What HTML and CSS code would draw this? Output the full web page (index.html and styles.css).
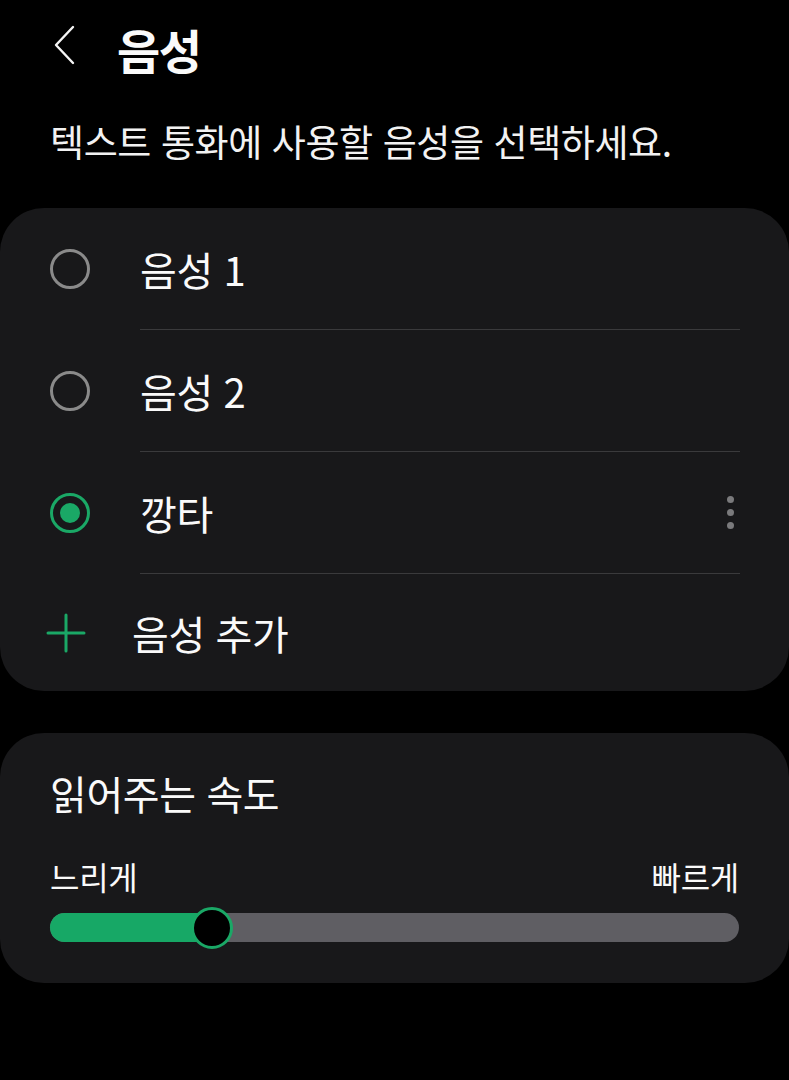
FILE: index.html
```html
<!DOCTYPE html>
<html lang="ko">
<head>
<meta charset="utf-8">
<link rel="stylesheet" href="styles.css">
</head>
<body>
<div class="screen">
  <header class="topbar">
    <svg class="back" width="24" height="40" viewBox="0 0 24 40"><polyline points="20,2 3,20 20,38" fill="none" stroke="#f5f5f5" stroke-width="2.4" stroke-linecap="round" stroke-linejoin="round"/></svg>
    <h1 class="title">음성</h1>
  </header>
  <p class="desc">텍스트 통화에 사용할 음성을 선택하세요.</p>

  <section class="card voices">
    <div class="row">
      <span class="radio"></span>
      <div class="row-body"><span class="label">음성 1</span></div>
    </div>
    <div class="row">
      <span class="radio"></span>
      <div class="row-body"><span class="label">음성 2</span></div>
    </div>
    <div class="row">
      <span class="radio checked"></span>
      <div class="row-body">
        <span class="label">깡타</span>
        <span class="kebab"><i></i><i></i><i></i></span>
      </div>
    </div>
    <div class="row add">
      <svg class="plus" width="40" height="40" viewBox="0 0 40 40"><path d="M20 2V38M2 20H38" stroke="#1aa866" stroke-width="3" stroke-linecap="round"/></svg>
      <span class="label">음성 추가</span>
    </div>
  </section>

  <section class="card speed">
    <h2 class="speed-title">읽어주는 속도</h2>
    <div class="ends"><span>느리게</span><span>빠르게</span></div>
    <div class="slider">
      <div class="fill" style="width: 162px"></div>
      <div class="thumb" style="left: 162px"></div>
    </div>
  </section>
</div>
</body>
</html>
```

FILE: styles.css
```css
* { box-sizing: border-box; }
html, body { margin: 0; padding: 0; background: #000; }
body {
  font-family: "Noto Sans CJK KR", "Noto Sans", sans-serif;
  color: #fafafa;
  width: 789px;
  height: 1080px;
  overflow: hidden;
}
.screen { display: flex; flex-direction: column; }
.topbar {
  display: flex;
  align-items: center;
  height: 96px;
  padding-left: 53px;
  gap: 40px;
}
.back { display: block; margin-top: -6px; }
.title {
  margin: 0;
  font-size: 47px;
  font-weight: 700;
  letter-spacing: -1.5px;
  line-height: 1;
}
.desc {
  margin: 20px 0 0 50px;
  font-size: 37px;
  line-height: 50px;
  letter-spacing: -0.4px;
  color: #f2f2f2;
}
.card {
  background: #18181a;
  border-radius: 44px;
}
.voices { margin-top: 42px; }
.row {
  display: flex;
  align-items: stretch;
  height: 122px;
}
.radio {
  flex: none;
  align-self: center;
  width: 40px;
  height: 40px;
  margin: 0 50px 0 50px;
  border: 3px solid #8a8a8a;
  border-radius: 50%;
  position: relative;
}
.radio.checked { border-color: #1aa866; border-width: 3.5px; }
.radio.checked::after {
  content: "";
  position: absolute;
  left: 50%; top: 50%;
  width: 20px; height: 20px;
  margin: -10px 0 0 -10px;
  background: #1aa866;
  border-radius: 50%;
}
.row-body {
  flex: 1;
  display: flex;
  align-items: center;
  justify-content: space-between;
  margin-right: 49px;
  border-bottom: 1px solid #3a3a3c;
}
.label {
  font-size: 40px;
  letter-spacing: -0.4px;
}
.kebab {
  display: flex;
  flex-direction: column;
  gap: 6px;
  margin-right: 6px;
}
.kebab i {
  display: block;
  width: 7px; height: 7px;
  border-radius: 50%;
  background: #7a7a7c;
}
.row.add { height: 117px; align-items: center; }
.plus { margin: 0 46px 0 46px; }
.speed {
  margin-top: 42px;
  height: 250px;
  padding: 32px 50px 0 50px;
}
.speed-title {
  margin: 0;
  font-size: 40px;
  font-weight: 400;
  line-height: 56px;
  letter-spacing: -0.4px;
}
.ends {
  display: flex;
  justify-content: space-between;
  margin-top: 35px;
  font-size: 32px;
  line-height: 40px;
  letter-spacing: -0.3px;
}
.slider {
  position: relative;
  margin-top: 17px;
  height: 29px;
  border-radius: 15px;
  background: #5f5e63;
}
.fill {
  height: 100%;
  border-radius: 15px 0 0 15px;
  background: #17a866;
}
.thumb {
  position: absolute;
  top: 50%;
  width: 42px; height: 42px;
  margin: -21px 0 0 -21px;
  border-radius: 50%;
  background: #000;
  border: 3px solid #1aa866;
}
```
